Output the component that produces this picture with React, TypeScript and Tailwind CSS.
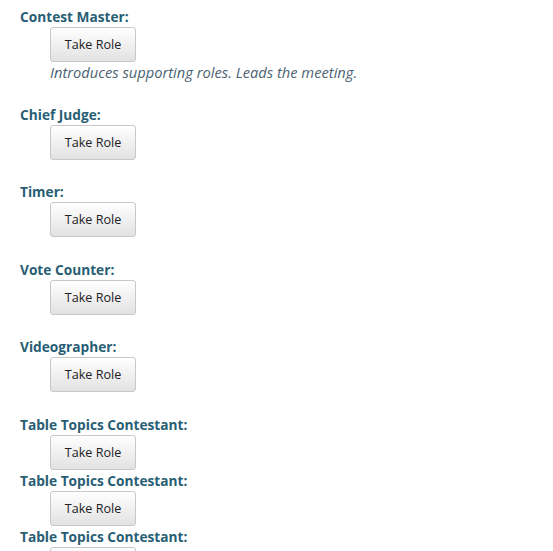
import React from "react";

type Role = { name: string; note?: string; spaced: boolean };

const roles: Role[] = [
  { name: "Contest Master", note: "Introduces supporting roles. Leads the meeting.", spaced: true },
  { name: "Chief Judge", spaced: true },
  { name: "Timer", spaced: true },
  { name: "Vote Counter", spaced: true },
  { name: "Videographer", spaced: true },
  { name: "Table Topics Contestant", spaced: false },
  { name: "Table Topics Contestant", spaced: false },
  { name: "Table Topics Contestant", spaced: false },
];

export default function App() {
  return (
    <div
      className="h-[551px] overflow-hidden bg-white pl-5 pt-1.5"
      style={{ fontFamily: '"Open Sans", "Liberation Sans", sans-serif' }}
    >
      {roles.map((role, i) => (
        <div key={i} className={role.spaced ? "mb-[21.6px]" : ""}>
          <div className="h-[21px] text-[13.7px] leading-[21px] font-bold text-[#285e74]">
            {role.name}:
          </div>
          <div className="pl-[30px]">
            <button className="h-[35px] w-[86px] rounded-[3px] border border-[#c8c8c8] bg-gradient-to-b from-white to-[#e2e2e2] pt-[2px] text-[12.6px] text-[#222]">
              Take Role
            </button>
            {role.note && (
              <div className="h-5 text-[14.7px] leading-5 italic text-[#4b6272]">{role.note}</div>
            )}
          </div>
        </div>
      ))}
    </div>
  );
}
